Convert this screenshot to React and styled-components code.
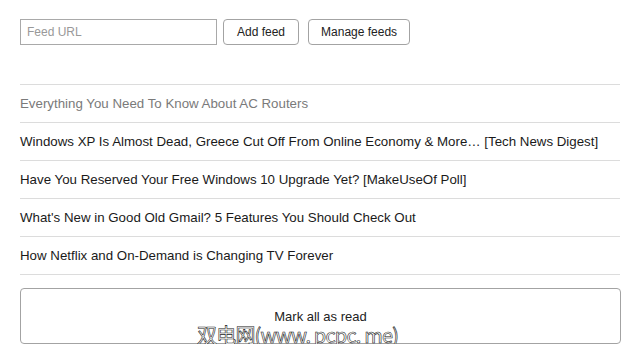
import React from 'react';
import styled, { createGlobalStyle } from 'styled-components';

const GlobalStyle = createGlobalStyle`
  body {
    margin: 0;
    background: #fff;
    font-family: "Liberation Sans", Arial, sans-serif;
    color: #222;
  }
`;

const Page = styled.div`
  position: relative;
  padding: 19px 20px 0;
  width: 600px;
`;

const Toolbar = styled.div`
  display: flex;
  align-items: center;
  gap: 6px;
  height: 26px;
`;

const UrlInput = styled.input`
  box-sizing: border-box;
  width: 197px;
  height: 26px;
  border: 1px solid #a9a9a9;
  border-radius: 0;
  padding: 0 6px;
  font: 12px "Liberation Sans", Arial, sans-serif;
  color: #222;
  outline: none;

  &::placeholder {
    color: #999;
  }
`;

const Button = styled.button`
  box-sizing: border-box;
  height: 26px;
  padding: 0 ${(p) => p.$pad || 13}px;
  margin-left: ${(p) => p.$gap || 0}px;
  border: 1px solid #a3a3a3;
  border-radius: 4px;
  background: #fff;
  font: 12px "Liberation Sans", Arial, sans-serif;
  color: #222;
`;

const List = styled.ul`
  list-style: none;
  margin: 39px 0 0;
  padding: 0;
  border-bottom: 1px solid #dcdcdc;
`;

const Item = styled.li`
  box-sizing: border-box;
  height: 38px;
  display: flex;
  align-items: center;
  border-top: 1px solid #dcdcdc;
  font: 13.3px "Liberation Sans", Arial, sans-serif;
  white-space: nowrap;
  color: ${(p) => (p.$read ? '#7a7a7a' : '#1a1a1a')};
`;

const MarkButton = styled.button`
  box-sizing: border-box;
  display: block;
  width: 601px;
  height: 56px;
  margin-top: 13px;
  border: 1px solid #a3a3a3;
  border-radius: 4px;
  background: #fff;
  font: 13px "Liberation Sans", Arial, sans-serif;
  color: #222;
  padding-bottom: 1px;
`;

const Watermark = styled.div`
  position: absolute;
  left: 197px;
  top: 324px;
  font: 20px "Noto Sans CJK SC", "Liberation Sans", sans-serif;
  line-height: 22px;
  color: #fff;
  -webkit-text-stroke: 0.6px #222;
  letter-spacing: -0.8px;
  white-space: nowrap;
`;

const items = [
  { title: 'Everything You Need To Know About AC Routers', read: true },
  { title: 'Windows XP Is Almost Dead, Greece Cut Off From Online Economy & More… [Tech News Digest]' },
  { title: 'Have You Reserved Your Free Windows 10 Upgrade Yet? [MakeUseOf Poll]' },
  { title: "What's New in Good Old Gmail? 5 Features You Should Check Out" },
  { title: 'How Netflix and On-Demand is Changing TV Forever' },
];

export default function App() {
  return (
    <>
      <GlobalStyle />
      <Page>
        <Toolbar>
          <UrlInput placeholder="Feed URL" />
          <Button>Add feed</Button>
          <Button $gap={3} $pad={12}>Manage feeds</Button>
        </Toolbar>
        <List>
          {items.map((item) => (
            <Item key={item.title} $read={item.read}>
              {item.title}
            </Item>
          ))}
        </List>
        <MarkButton>Mark all as read</MarkButton>
        <Watermark>双电网(www. pcpc. me)</Watermark>
      </Page>
    </>
  );
}
